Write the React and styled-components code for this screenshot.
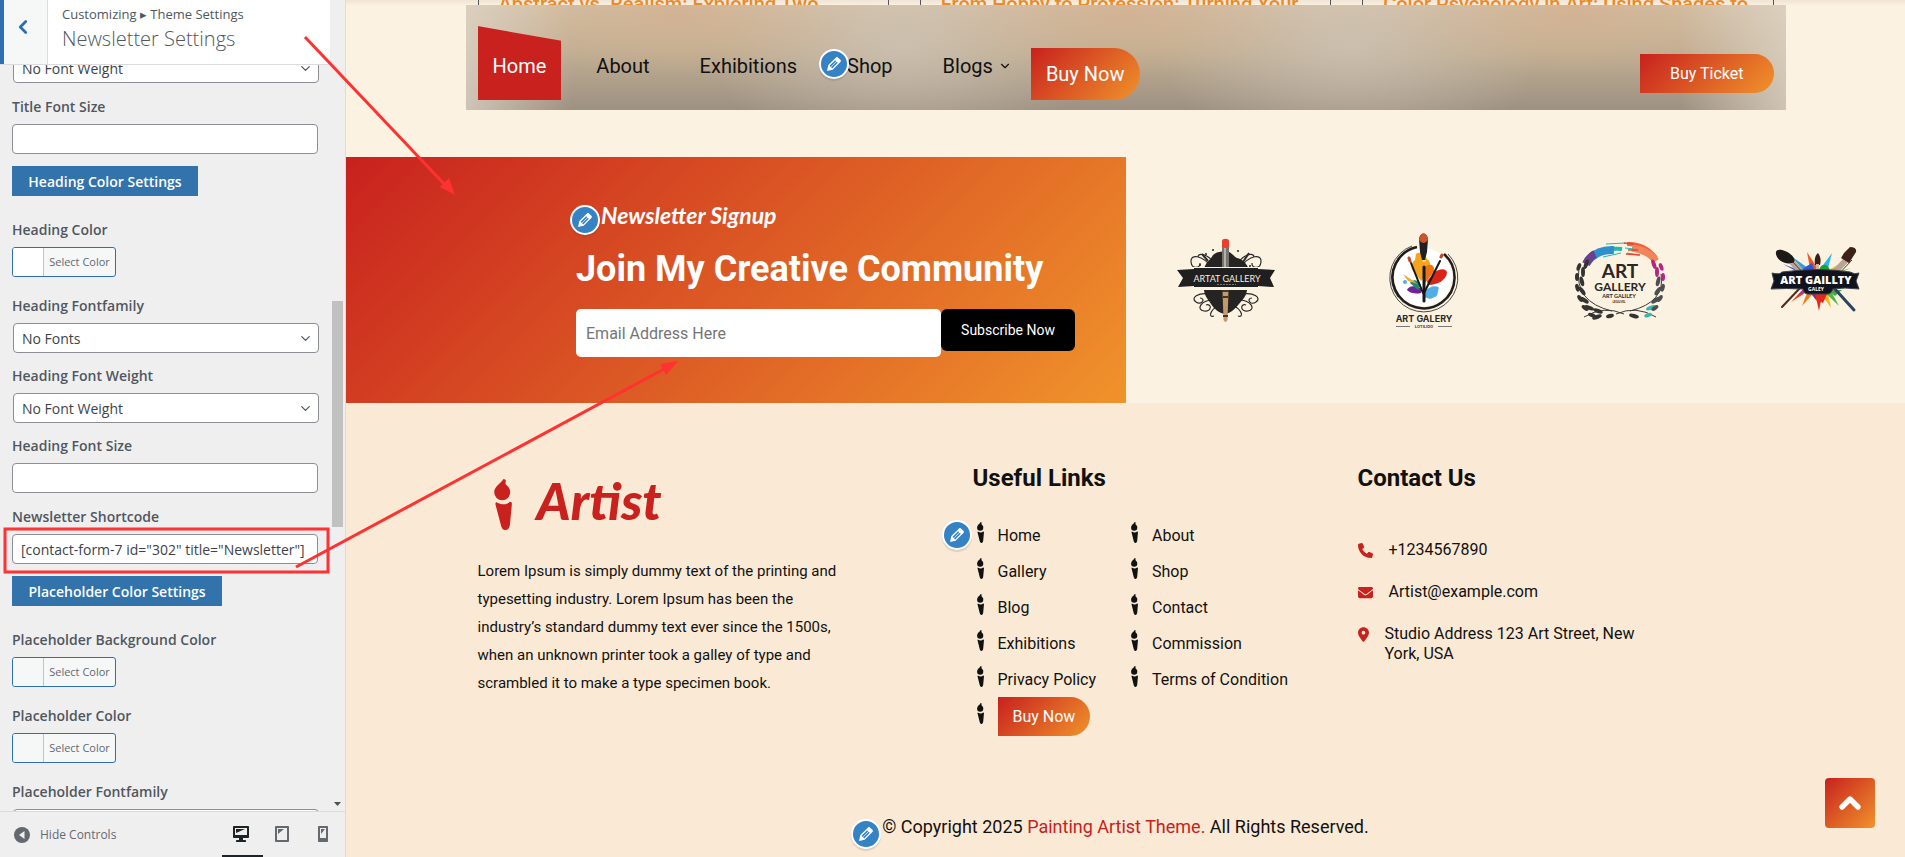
import React from "react";
import styled, { createGlobalStyle, css } from "styled-components";
import { ChevronDown, ChevronLeft, ChevronUp } from "lucide-react";
import { FaEnvelope, FaLocationDot, FaPhone } from "react-icons/fa6";

const GlobalStyle = createGlobalStyle`
  *, *::before, *::after { box-sizing: border-box; }
  body { margin: 0; font-family: Roboto, "Liberation Sans", sans-serif; color: #111; }
  h1, h2, h3, p, ul { margin: 0; padding: 0; }
  ul { list-style: none; }
  a { color: inherit; text-decoration: none; }
  button, input, select { font-family: inherit; margin: 0; }
`;

const warm = "linear-gradient(135deg, #c8211e 0%, #f0932b 100%)";

const Shell = styled.div`
  position: relative;
  display: flex;
  height: 100vh;
  overflow: hidden;
`;

/* ---------- customizer sidebar ---------- */

const Sidebar = styled.aside`
  flex: 0 0 346px;
  display: flex;
  flex-direction: column;
  background: #efeff0;
  border-right: 1px solid #dcdcde;
  color: #50575e;
  font-family: "Open Sans", "Noto Sans", sans-serif;
`;

const PanelHead = styled.header`
  display: flex;
  height: 65px;
  margin-right: 15px;
  background: #fff;
  border-bottom: 1px solid #dcdcde;
`;

const BackButton = styled.button`
  width: 48px;
  padding: 0 0 10px 8px;
  display: flex;
  align-items: center;
  background: #f6f7f7;
  border: 0;
  border-left: 4px solid #2e6fb3;
  border-right: 1px solid #dcdcde;
  color: #2e6fb3;
`;

const PanelTitles = styled.div`
  padding: 4px 14px;
`;

const Crumb = styled.p`
  font-size: 13px;
  line-height: 20px;
`;

const PanelTitle = styled.h1`
  font-size: 20px;
  font-weight: 300;
  line-height: 30px;
`;

const PanelScroll = styled.div`
  flex: 1;
  min-height: 0;
  display: flex;
  overflow: hidden;
`;

const Controls = styled.div`
  flex: 1;
  padding: 0 11px 0 12px;
`;

const FirstControl = styled.div`
  margin-top: -12px;
`;

const Control = styled.div`
  margin-top: ${(p) => p.$gap || 12}px;
`;

const Label = styled.label`
  display: block;
  height: 29px;
  font-size: 14px;
  font-weight: 600;
  line-height: 24px;
`;

const field = css`
  display: block;
  width: 306px;
  height: 30px;
  padding: 0 8px;
  border: 1px solid #8c8f94;
  border-radius: 4px;
  background: #fff;
  color: #3c434a;
  font-size: 14px;
`;

const TextField = styled.input`
  ${field}
`;

const SelectWrap = styled.div`
  position: relative;
  width: 306px;
  margin-left: 1px;

  svg {
    position: absolute;
    right: 6px;
    top: 8px;
    pointer-events: none;
  }
`;

const SelectBox = styled.select`
  ${field}
  appearance: none;
`;

const SectionButton = styled.button`
  display: block;
  width: ${(p) => p.$width}px;
  height: 30px;
  margin-top: 12px;
  margin-bottom: 22px;
  padding: 0;
  border: 0;
  background: #3173aa;
  color: #fff;
  font-size: 14px;
  font-weight: 600;
`;

const ColorButton = styled.button`
  display: flex;
  width: 104px;
  height: 30px;
  padding: 0;
  border: 1px solid #2e6fb3;
  border-radius: 3px;
  background: #f6f7f7;
  color: #646970;
  font-size: 11px;
  line-height: 28px;
  overflow: hidden;
`;

const Swatch = styled.span`
  width: 31px;
  height: 28px;
  background: ${(p) => p.$color};
  border-right: 1px solid #c3c4c7;
`;

const SwatchText = styled.span`
  flex: 1;
  text-align: center;
`;

const Track = styled.div`
  width: 15px;
  display: flex;
  flex-direction: column;
  align-items: center;
  padding: 236px 2px 5px 2px;
`;

const Thumb = styled.div`
  width: 11px;
  height: 226px;
  background: #c1c1c1;
  margin-bottom: auto;
`;

const PanelFoot = styled.footer`
  display: flex;
  justify-content: space-between;
  height: 46px;
  border-top: 1px solid #dcdcde;
`;

const CollapseButton = styled.button`
  display: flex;
  align-items: center;
  gap: 10px;
  padding: 0 0 0 14px;
  border: 0;
  background: none;
  color: #646970;
  font-size: 12px;
`;

const Devices = styled.div`
  display: flex;
`;

const DeviceButton = styled.button`
  width: 41px;
  padding: 5px 3px 0 0;
  border: 0;
  border-bottom: 2px solid ${(p) => (p.$active ? "#1d2327" : "transparent")};
  background: none;
  color: ${(p) => (p.$active ? "#1d2327" : "#646970")};
`;

/* ---------- site preview ---------- */

const Preview = styled.main`
  flex: 1;
  min-width: 0;
  display: flex;
  flex-direction: column;
  background: #fcf2e1;
`;

const Container = styled.div`
  width: 100%;
  max-width: 1320px;
  margin: 0 auto;
  padding: 0 12px;
`;

const PostStrip = styled.section`
  height: 5px;
  overflow: hidden;
  background: linear-gradient(#efe4d5, #fbf0df);
`;

const Posts = styled.div`
  display: grid;
  grid-template-columns: repeat(3, 1fr);
  gap: 31px;
`;

const Post = styled.article`
  height: 8px;
  display: flex;
  align-items: center;
  padding: 0 20px;
  border: solid #555;
  border-width: 0 1px;
`;

const PostTitle = styled.h3`
  color: #e98b2a;
  font-size: 20px;
  font-weight: 500;
  line-height: 24px;
  white-space: nowrap;
`;

const NavBar = styled.nav`
  width: 100%;
  max-width: 1320px;
  height: 105px;
  margin: 0 auto 47px;
  padding: 0 12px;
  display: flex;
  justify-content: space-between;
  align-items: flex-start;
  background:
    linear-gradient(90deg, rgba(222, 212, 198, 0.75), transparent 8%, transparent 92%, rgba(222, 212, 198, 0.75)),
    radial-gradient(ellipse 190px 60px at 16% 10%, rgba(211, 176, 143, 0.75), rgba(211, 176, 143, 0)),
    radial-gradient(ellipse 190px 60px at 50% 10%, rgba(211, 176, 143, 0.75), rgba(211, 176, 143, 0)),
    radial-gradient(ellipse 190px 60px at 84% 10%, rgba(211, 176, 143, 0.75), rgba(211, 176, 143, 0)),
    radial-gradient(ellipse 190px 120px at 33% 40%, rgba(208, 198, 186, 0.65), rgba(208, 198, 186, 0)),
    radial-gradient(ellipse 190px 120px at 67% 40%, rgba(208, 198, 186, 0.65), rgba(208, 198, 186, 0)),
    linear-gradient(#d2c0a6 0%, #c0ae93 45%, #9e9182 100%);
`;

const NavList = styled.ul`
  display: flex;
  align-items: flex-start;
  gap: 20px;
  font-size: 20px;
  line-height: 24px;
`;

const NavItem = styled.li`
  position: relative;
  padding-top: 21px;
  ${(p) => p.$tight && "margin-left: -16px;"}
`;

const NavLink = styled.a`
  display: flex;
  align-items: center;
  gap: 5px;
  height: 74px;
  padding: 6px 15px 0;
  ${(p) =>
    p.$active &&
    css`
      background: #c8211e;
      color: #fff;
      clip-path: polygon(0 0, 100% 20%, 100% 100%, 0 100%);
    `}
`;

const PillLink = styled.a`
  display: inline-flex;
  align-items: center;
  justify-content: center;
  height: ${(p) => p.$height || 39}px;
  padding: 0 ${(p) => p.$pad || 15}px;
  background: ${warm};
  color: #fff;
  font-size: ${(p) => (p.$large ? 20 : 16)}px;
  border-radius: 0 ${(p) => (p.$large ? "26px 26px" : "20px 20px")} 0;
`;

const NavPill = styled(PillLink)`
  margin-top: 22px;
`;

const TicketPill = styled(PillLink)`
  margin-top: 49px;
`;

const Badge = styled.button`
  position: absolute;
  left: ${(p) => p.$left}px;
  top: ${(p) => p.$top}px;
  width: 30px;
  height: 30px;
  display: flex;
  align-items: center;
  justify-content: center;
  padding: 0;
  border: 2px solid #fff;
  border-radius: 50%;
  background: #3582c4;
  color: #fff;
  box-shadow: 0 2px 1px rgba(46, 68, 83, 0.15);
`;

const SignupRow = styled.section`
  display: grid;
  grid-template-columns: 1fr 1fr;
  height: 246px;
`;

const Signup = styled.div`
  padding: 42px 50px 0 230px;
  background: ${warm};
  color: #fff;
`;

const Kicker = styled.p`
  position: relative;
  padding-left: 25px;
  font-family: Lato, sans-serif;
  font-size: 23px;
  font-style: italic;
  font-weight: 700;
  line-height: 32px;
`;

const SignupTitle = styled.h2`
  margin-top: 18px;
  font-size: 36px;
  font-weight: 700;
  line-height: 40px;
  white-space: nowrap;
`;

const SignupForm = styled.form`
  display: flex;
  align-items: flex-start;
  margin-top: 20px;
`;

const EmailInput = styled.input`
  width: 365px;
  height: 48px;
  padding: 0 10px;
  border: 0;
  border-radius: 5px;
  background: #fff;
  font-size: 16px;

  &::placeholder {
    color: #757575;
  }
`;

const SubscribeButton = styled.button`
  width: 134px;
  height: 42px;
  padding: 0;
  border: 0;
  border-radius: 6px;
  background: #000;
  color: #fff;
  font-size: 14px;
`;

const Brands = styled.div`
  overflow: hidden;
`;

const BrandRow = styled.div`
  display: grid;
  grid-template-columns: repeat(4, 1fr);
  height: 100%;
  margin: 0 -10px 0 2px;
  place-items: center;
`;

const Footer = styled.footer`
  position: relative;
  flex: 1;
  padding-top: 61px;
  background: #fae9d4;
`;

const FooterGrid = styled.div`
  display: grid;
  grid-template-columns: 495fr 385fr 416fr;
`;

const Brand = styled.a`
  display: flex;
  align-items: flex-start;
  gap: 25px;
  margin: 15px 0 27px 16px;
  height: 51px;
  color: #c8211e;
  font-family: Lato, sans-serif;
  font-size: 52px;
  font-style: italic;
  font-weight: 900;
  line-height: 42px;
`;

const About = styled.p`
  max-width: 370px;
  font-size: 15px;
  line-height: 28px;
`;

const FooterTitle = styled.h3`
  font-size: 24px;
  font-weight: 700;
  line-height: 29px;
`;

const LinkColumns = styled.div`
  position: relative;
  display: flex;
  gap: 35px;
  margin: 24px 0 0 4px;
`;

const LinkItem = styled.li`
  display: flex;
  align-items: center;
  gap: 14px;
  min-height: 36px;
  font-size: 16px;

  > svg {
    margin-bottom: 6px;
  }
`;

const ContactList = styled.ul`
  display: grid;
  gap: 22px;
  margin-top: 47px;
  font-size: 16px;
  line-height: 20px;
`;

const ContactItem = styled.li`
  display: flex;
  gap: 16px;
  max-width: 290px;

  svg {
    flex: none;
    width: ${(p) => (p.$narrow ? 11 : 15)}px;
    height: 15px;
    margin-top: 3px;
    color: #c8211e;
  }
`;

const Copyright = styled.p`
  margin-top: 79px;
  padding-bottom: 16px;
  font-size: 18px;
  line-height: 24px;
  text-align: center;

  a {
    color: #c8211e;
  }
`;

const CopyrightText = styled.span`
  position: relative;
`;

const TopButton = styled.button`
  position: absolute;
  right: 30px;
  bottom: 29px;
  width: 50px;
  height: 50px;
  display: flex;
  align-items: center;
  justify-content: center;
  padding: 0;
  border: 0;
  border-radius: 4px;
  background: ${warm};
  color: #fff;
`;

const Annotations = styled.svg`
  position: absolute;
  inset: 0;
  width: 100%;
  height: 100%;
  pointer-events: none;
`;

/* ---------- drawings ---------- */

const Pencil = () => (
  <svg width="20" height="20" viewBox="0 0 20 20" fill="currentColor" aria-hidden="true">
    <path d="M13.89 3.39l2.71 2.72c.46.46.42 1.24.03 1.64l-8.01 8.02-5.56 1.16 1.16-5.58s7.6-7.63 7.99-8.03c.39-.39 1.22-.39 1.68.07zm-2.73 2.79l-5.59 5.61 1.11 1.11 5.54-5.65zm-2.97 8.23l5.58-5.6-1.07-1.08-5.59 5.6z" />
  </svg>
);

const EditBadge = ({ left, top, label }) => (
  <Badge type="button" $left={left} $top={top} aria-label={label}>
    <Pencil />
  </Badge>
);

const Torch = ({ width, height }) => (
  <svg width={width} height={height} viewBox="0 0 18 51" preserveAspectRatio="none" fill="currentColor" aria-hidden="true">
    <path d="M9.500 0c1.200 0 2.500.8 2.300 2.200-.3 1-.5 2-.1 3 2.700 2.200 4.500 4.800 4.500 8.100a8 8 0 0 1-16 0C.1 7.500 6.500 5 9.500 0z" />
    <path d="M3 23.500C7 26 13 26 15.500 23c1.500-.6 2.500.6 2.400 2L16 45c-.5 4-1.800 6-4.600 6S7.500 49 6.600 45L1.500 25.500C1.200 24 2 23 3 23.500z" />
  </svg>
);

const DeviceIcon = ({ d }) => (
  <svg width="20" height="20" viewBox="0 0 20 20" fill="currentColor" aria-hidden="true">
    <path fillRule="evenodd" d={d} />
  </svg>
);

const LogoBanner = () => (
  <svg width="100" height="100" viewBox="0 0 100 100" role="img" aria-label="Artat Gallery">
    <g fill="none" stroke="#2b2a29" strokeWidth="1.200">
      <path d="M36 38C26 24 14 24 15 32s10 6 9 1M64 38c10-14 22-14 21-6s-10 6-9 1" />
      <path d="M38 33C32 24 22 22 22 27M62 33c6-9 16-11 16-6" />
      <path d="M34 64c-12-2-20 4-14 8s10-4 4-4M66 64c12-2 20 4 14 8s-10-4-4-4" />
      <path d="M38 70c-14 0-18 10-10 11s8-8 2-6M62 70c14 0 18 10 10 11s-8-8-2-6" />
      <path d="M42 76c-8 4-10 12-4 10M58 76c8 4 10 12 4 10" />
      <path d="M67 32l6-9M32 31l-6-7" strokeWidth="2" />
    </g>
    <path fill="#252423" d="M28 40c1-8 6-9 9-15 5-4 8-3 12-4 6 0 8 5 12 7 5 1 10 5 12 12zM28 60c1 7 4 9 7 14s8 9 14 10c6-1 10-5 14-10s7-7 8-14z" />
    <g fill="#252423">
      <circle cx="30" cy="24" r="1" /><circle cx="37" cy="20" r="1" /><circle cx="62" cy="21" r="1" /><circle cx="24" cy="35" r="1" /><circle cx="74" cy="36" r="1" />
    </g>
    <rect x="46" y="12" width="7" height="29" fill="#77736f" />
    <rect x="48" y="18" width="2" height="22" fill="#b5b0aa" />
    <path fill="#e8402c" d="M46 11c0-3 7-3 7 0v6h-7z" />
    <path fill="#c39a6b" d="M46.500 60h6l-1 30q-2 4-4 0z" />
    <path fill="#45352a" d="M46 60h7v2h-7zM47 66h5v2h-5zM47 85h5v2h-5z" />
    <path fill="#fcf2e1" d="M6 37h88v23H6z" />
    <path fill="#1f1f20" d="M1 40l17-1v-1h64v1l17 1-5 8 4 9-16-1v1H18v-1L2 57l5-9z" />
    <text x="51" y="52" textAnchor="middle" fill="#f3eee6" fontFamily="Lato, sans-serif" fontSize="9">ARTAT GALLERY</text>
    <path d="M41 54.500h19" stroke="#777" strokeWidth="1" strokeDasharray="2 1" />
  </svg>
);

const LogoCircle = () => (
  <svg width="100" height="100" viewBox="-1 1 100 100" role="img" aria-label="Art Galery">
    <circle cx="49" cy="48" r="29" fill="#fff" />
    <g fill="none" stroke="#1d1d1d">
      <path d="M43 18A31 31 0 1 0 70 25" strokeWidth="2.500" />
      <path d="M38 17A34 34 0 1 0 74 25M36 20A32 32 0 0 0 24 68" strokeWidth="0.800" />
    </g>
    <path fill="#f5a51d" d="M42 25c4-3 9 0 11 5 4 2 4 8 1 13l-7 9-7-9c-4-4-3-9 1-12z" />
    <path fill="#ee7412" d="M50 38c8-5 11-1 10 5l-9 11z" />
    <path fill="#db2218" d="M53 52l7-8c5-5 13-5 13 0-1 7-9 12-19 12z" />
    <path fill="#53aee6" d="M50 63c5-6 13-7 15-4-2 3 0 7-4 9l-5 2-6-2zM31 51a2 2 0 1 1 0 4a2 2 0 0 1 0-4z" />
    <path fill="#6d2498" d="M48 61c-5-6-14-4-15 0 4 4 10 4 14 3z" />
    <path fill="#1a8b70" d="M47 56c-3-6-9-6-11-2l8 7z" />
    <path fill="#e9ae2c" d="M44 55l-15-10 5 7z" />
    <g stroke="#171717" strokeLinecap="round">
      <path d="M50 38v34" strokeWidth="3" />
      <path d="M37 34l12 30M66 32L50 64" strokeWidth="2" />
    </g>
    <path fill="#202020" d="M45 10c1-7 8-7 9 0l-1 13-2 8h-3l-2-8z" />
    <path fill="#ca542d" d="M45 11c1-9 8-9 9 0-3 4-6 4-9 0z" />
    <path stroke="#bd4729" strokeWidth="3" strokeLinecap="round" d="M35 29l1 3M68 26l-1 2" />
    <path stroke="#fff" d="M48.500 32h3" />
    <text x="50" y="93" textAnchor="middle" fill="#2a2927" fontFamily="Inter, sans-serif" fontWeight="700" fontSize="9">ART GALERY</text>
    <text x="50" y="99" textAnchor="middle" fill="#444" fontFamily="Inter, sans-serif" fontWeight="700" fontSize="4">LOTILIDO</text>
    <path d="M22 97.500h14M64 97.500h14" stroke="#777" />
  </svg>
);

const leaves = [
  [16, 82, 20], [10, 75, 35], [6, 66, 55], [4, 56, 75], [4, 46, 90], [6, 37, 110],
];

const LogoWreath = () => (
  <svg width="100" height="100" viewBox="0 0 100 100" role="img" aria-label="Art Gallery">
    <path d="M17 33Q27 17 52 19" fill="none" stroke="#20b9b2" strokeWidth="4" />
    <path d="M16 34Q25 19 44 20" fill="none" stroke="#2f8fce" strokeWidth="8" />
    <path d="M16 34q4-8 9-10" fill="none" stroke="#68408f" strokeWidth="8" />
    <path d="M57 14q18-1 29 14" fill="none" stroke="#ee633f" strokeWidth="4" />
    <path d="M62 18q16 2 24 13" fill="none" stroke="#f08658" strokeWidth="7" />
    <path d="M36 14l19-1M33 27l18-4M55 18l9 1M57 23l12 2" fill="none" stroke="#20b9b2" strokeWidth="1" />
    <path d="M54 13l10 1M56 24l14 1M58 20h10" fill="none" stroke="#e24634" strokeWidth="1.500" />
    <g fill="none" stroke="#3a3a39" strokeWidth="1">
      <path d="M9 38Q4 72 42 81M91 44Q96 72 60 81M14 87q20-12 40-3M86 87q-20-12-40-3" />
    </g>
    {leaves.map(([x, y, a], i) => (
      <g key={y}>
        <g transform={`translate(${x + 6} ${y}) rotate(${a})`} fill="#333332">
          <ellipse cx="-4" cy="-3" rx="5" ry="2" />
          <ellipse cx="1" cy="3" rx="4" ry="2" />
        </g>
        <g transform={`translate(${94 - x} ${y}) rotate(${180 - a})`} fill={i > 3 ? "#b5267f" : i === 0 ? "#35b8ad" : "#4b4f52"}>
          <ellipse cx="-4" cy="3" rx="5" ry="2" />
          <ellipse cx="1" cy="-3" rx="4" ry="2" />
        </g>
      </g>
    ))}
    <g fill="#333332">
      <ellipse cx="28" cy="81" rx="5" ry="2" transform="rotate(20 28 81)" />
      <ellipse cx="27" cy="87" rx="5" ry="2" transform="rotate(-20 27 87)" />
      <ellipse cx="40" cy="86" rx="4" ry="2" transform="rotate(-15 40 86)" />
      <ellipse cx="64" cy="86" rx="5" ry="2" transform="rotate(15 64 86)" />
    </g>
    <g fill="#292725" textAnchor="middle" fontFamily="Lato, sans-serif" fontWeight="700">
      <text x="50" y="48" fontSize="19">ART</text>
      <text x="50" y="61" fontSize="12">GALLERY</text>
      <text x="49" y="68" fontSize="5.500">ART GALILEY</text>
      <text x="49" y="73" fontSize="3">LEGUVEL</text>
    </g>
  </svg>
);

const rays = [
  ["#3f5fe0", -34, -16], ["#31a0d8", -26, -24], ["#ef5a2a", -10, -28], ["#2ab7e6", 15, -27], ["#f2c219", 22, -16], ["#74bc3e", 34, -12],
  ["#e33b1e", -26, 22], ["#ef7b1c", -15, 26], ["#e02c23", 2, 31], ["#f2b719", 14, 28], ["#4fb83f", 22, 26], ["#8a3fb0", -20, 16],
];

const LogoCrossed = () => (
  <svg width="100" height="100" viewBox="-3 0 100 100" role="img" aria-label="Art Gaillty">
    {rays.map(([c, x, y]) => (
      <path key={c + x} d={`M42 50L${47 + x} ${50 + y}L55 50z`} fill={c} />
    ))}
    <path fill="#3457cf" d="M30 45c2-8 8-9 12-12l5 14z" />
    <path fill="#1f9d3c" d="M48 44c1-10 8-12 11-6l3 8z" />
    <path fill="#f0d020" d="M57 43c4-7 9-5 12 0z" />
    <path fill="#7e3196" d="M38 60h12l-4 10z" />
    <path fill="#e5281c" d="M46 62h12l-5 11-7-3z" />
    <path fill="#3fa848" d="M58 60h14l-7 6z" />
    <g stroke="#4a2b1c" strokeLinecap="round">
      <path d="M30 58L12 77" strokeWidth="2" />
      <path d="M64 58l20 22" strokeWidth="3" stroke="#29445e" />
    </g>
    <path d="M20 30l14 15M78 28L63 44" stroke="#b8a692" strokeWidth="6" />
    <path d="M20 29l16 17M82 30L65 48" stroke="#463d38" strokeWidth="1" />
    <path fill="#1d1917" d="M6 24c-1-5 4-5 9-3 7 3 11 8 9 11-7 4-17-1-18-8z" />
    <path fill="#3d2119" d="M74 23l6-6q7 0 6 5l-7 11-8-5z" />
    <path fill="#3b1f17" d="M45 35c-1-8 1-10 3-12 3 4 3 8 2 12z" />
    <path stroke="#c9b79f" strokeWidth="3" d="M47.500 34v8" />
    <path fill="#10131d" stroke="#3b404c" strokeWidth="1" d="M2 43q8 2 10-1 38-5 68 0 5 3 9 1l-3 8 3 8q-15-2-26 0-2 5-5 5H38q-4 0-5-5-17-1-32 0l3-8z" />
    <text x="46" y="54" textAnchor="middle" fill="#fff" fontFamily="Open Sans, sans-serif" fontWeight="800" fontSize="11">ART GAILLTY</text>
    <text x="46" y="61" textAnchor="middle" fill="#fff" fontFamily="Open Sans, sans-serif" fontWeight="700" fontSize="5">GALEY</text>
  </svg>
);

/* ---------- page ---------- */

const SelectControl = ({ id, label, value, gap }) => (
  <Control $gap={gap}>
    <Label htmlFor={id}>{label}</Label>
    <SelectWrap>
      <SelectBox id={id} defaultValue={value}>
        <option>{value}</option>
      </SelectBox>
      <ChevronDown size={15} />
    </SelectWrap>
  </Control>
);

const TextControl = ({ id, label, value = "", gap }) => (
  <Control $gap={gap}>
    <Label htmlFor={id}>{label}</Label>
    <TextField id={id} type="text" defaultValue={value} />
  </Control>
);

const ColorControl = ({ id, label, color = "#f6f7f7", gap }) => (
  <Control $gap={gap}>
    <Label htmlFor={id}>{label}</Label>
    <ColorButton id={id} type="button">
      <Swatch $color={color} />
      <SwatchText>Select Color</SwatchText>
    </ColorButton>
  </Control>
);

const primaryLinks = ["Home", "Gallery", "Blog", "Exhibitions", "Privacy Policy"];
const secondaryLinks = ["About", "Shop", "Contact", "Commission", "Terms of Condition"];
const postTitles = [
  "Abstract vs. Realism: Exploring Two",
  "From Hobby to Profession: Turning Your",
  "Color Psychology in Art: Using Shades to",
];

const FooterLink = ({ children }) => (
  <LinkItem>
    <Torch width={7} height={21} />
    <a href="#">{children}</a>
  </LinkItem>
);

export default function App() {
  return (
    <Shell>
      <GlobalStyle />
      <Sidebar>
        <PanelHead>
          <BackButton type="button" aria-label="Back">
            <ChevronLeft size={22} strokeWidth={3} />
          </BackButton>
          <PanelTitles>
            <Crumb>Customizing ▸ Theme Settings</Crumb>
            <PanelTitle>Newsletter Settings</PanelTitle>
          </PanelTitles>
        </PanelHead>
        <PanelScroll>
          <Controls>
            <FirstControl>
              <SelectWrap>
                <SelectBox aria-label="Title Font Weight" defaultValue="No Font Weight">
                  <option>No Font Weight</option>
                </SelectBox>
                <ChevronDown size={15} />
              </SelectWrap>
            </FirstControl>
            <TextControl id="title-size" label="Title Font Size" />
            <SectionButton type="button" $width={186}>Heading Color Settings</SectionButton>
            <ColorControl id="heading-color" label="Heading Color" color="#fff" gap={22} />
            <SelectControl id="heading-family" label="Heading Fontfamily" value="No Fonts" gap={17} />
            <SelectControl id="heading-weight" label="Heading Font Weight" value="No Font Weight" gap={11} />
            <TextControl id="heading-size" label="Heading Font Size" gap={11} />
            <TextControl id="shortcode" label="Newsletter Shortcode" value={'[contact-form-7 id="302" title="Newsletter"]'} />
            <SectionButton type="button" $width={210}>Placeholder Color Settings</SectionButton>
            <ColorControl id="placeholder-bg" label="Placeholder Background Color" gap={22} />
            <ColorControl id="placeholder-color" label="Placeholder Color" gap={17} />
            <SelectControl id="placeholder-family" label="Placeholder Fontfamily" value="No Fonts" gap={17} />
          </Controls>
          <Track>
            <Thumb />
            <svg width="7" height="4" viewBox="0 0 7 4" aria-hidden="true">
              <path d="M0 0h7L3.500 4z" fill="#505050" />
            </svg>
          </Track>
        </PanelScroll>
        <PanelFoot>
          <CollapseButton type="button">
            <svg width="16" height="16" viewBox="0 0 16 16" aria-hidden="true">
              <circle cx="8" cy="8" r="8" fill="#646970" />
              <path d="M10.500 4v8L5 8z" fill="#efeff0" />
            </svg>
            Hide Controls
          </CollapseButton>
          <Devices>
            <DeviceButton type="button" $active aria-label="Desktop preview">
              <DeviceIcon d="M3 2h14c.55 0 1 .45 1 1v10c0 .55-.45 1-1 1h-5v2h2c.55 0 1 .45 1 1v1H5v-1c0-.55.45-1 1-1h2v-2H3c-.55 0-1-.45-1-1V3c0-.55.45-1 1-1zm13 9V4H4v7h12zM5 5h9L5 9V5z" />
            </DeviceButton>
            <DeviceButton type="button" aria-label="Tablet preview">
              <DeviceIcon d="M4 2h12c.55 0 1 .45 1 1v14c0 .55-.45 1-1 1H4c-.55 0-1-.45-1-1V3c0-.55.45-1 1-1zm11 14V4H5v12h10zM6 5h6l-6 5V5z" />
            </DeviceButton>
            <DeviceButton type="button" aria-label="Mobile preview">
              <DeviceIcon d="M6 2h8c.55 0 1 .45 1 1v14c0 .55-.45 1-1 1H6c-.55 0-1-.45-1-1V3c0-.55.45-1 1-1zm7 12V4H7v10h6zM8 5h4l-4 5V5z" />
            </DeviceButton>
          </Devices>
        </PanelFoot>
      </Sidebar>

      <Preview>
        <PostStrip>
          <Container>
            <Posts>
              {postTitles.map((title) => (
                <Post key={title}>
                  <PostTitle>{title}</PostTitle>
                </Post>
              ))}
            </Posts>
          </Container>
        </PostStrip>

        <NavBar>
          <NavList>
            <NavItem><NavLink href="#" $active>Home</NavLink></NavItem>
            <NavItem><NavLink href="#">About</NavLink></NavItem>
            <NavItem><NavLink href="#">Exhibitions</NavLink></NavItem>
            <NavItem>
              <NavLink href="#">Shop</NavLink>
              <EditBadge left={-13} top={44} label="Edit menu" />
            </NavItem>
            <NavItem>
              <NavLink href="#">Blogs <ChevronDown size={14} /></NavLink>
            </NavItem>
            <NavItem $tight>
              <NavPill href="#" $large $height={52}>Buy Now</NavPill>
            </NavItem>
          </NavList>
          <TicketPill href="#" $pad={30}>Buy Ticket</TicketPill>
        </NavBar>

        <SignupRow>
          <Signup>
            <Kicker>
              Newsletter Signup
              <EditBadge left={-6} top={6} label="Edit newsletter" />
            </Kicker>
            <SignupTitle>Join My Creative Community</SignupTitle>
            <SignupForm>
              <EmailInput type="email" placeholder="Email Address Here" aria-label="Email Address" />
              <SubscribeButton type="button">Subscribe Now</SubscribeButton>
            </SignupForm>
          </Signup>
          <Brands>
            <BrandRow>
              <LogoBanner />
              <LogoCircle />
              <LogoWreath />
              <LogoCrossed />
            </BrandRow>
          </Brands>
        </SignupRow>

        <Footer>
          <Container>
            <FooterGrid>
              <div>
                <Brand href="#">
                  <Torch width={18} height={51} />
                  Artist
                </Brand>
                <About>
                  Lorem Ipsum is simply dummy text of the printing and typesetting industry. Lorem Ipsum has been the
                  industry’s standard dummy text ever since the 1500s, when an unknown printer took a galley of type and
                  scrambled it to make a type specimen book.
                </About>
              </div>
              <div>
                <FooterTitle>Useful Links</FooterTitle>
                <LinkColumns>
                  <EditBadge left={-35} top={3} label="Edit links" />
                  <ul>
                    {primaryLinks.map((l) => <FooterLink key={l}>{l}</FooterLink>)}
                    <LinkItem>
                      <Torch width={7} height={21} />
                      <PillLink href="#">Buy Now</PillLink>
                    </LinkItem>
                  </ul>
                  <ul>
                    {secondaryLinks.map((l) => <FooterLink key={l}>{l}</FooterLink>)}
                  </ul>
                </LinkColumns>
              </div>
              <div>
                <FooterTitle>Contact Us</FooterTitle>
                <ContactList>
                  <ContactItem><FaPhone /><a href="#">+1234567890</a></ContactItem>
                  <ContactItem><FaEnvelope /><a href="#">Artist@example.com</a></ContactItem>
                  <ContactItem $narrow><FaLocationDot /><span>Studio Address 123 Art Street, New York, USA</span></ContactItem>
                </ContactList>
              </div>
            </FooterGrid>
            <Copyright>
              <CopyrightText>
                <EditBadge left={-31} top={3} label="Edit copyright" />
                © Copyright 2025 <a href="#">Painting Artist Theme.</a> All Rights Reserved.
              </CopyrightText>
            </Copyright>
          </Container>
          <TopButton type="button" aria-label="Back to top">
            <ChevronUp size={32} strokeWidth={4} />
          </TopButton>
        </Footer>
      </Preview>

      <Annotations aria-hidden="true">
        <g stroke="#ff3131" strokeWidth="3" fill="none">
          <rect x="5" y="529" width="323" height="43" />
          <path d="M305 37L447 187M296 567L664 369" />
        </g>
        <path fill="#ff3131" d="M455 195l-15-8 9-9zM678 361l-12 14-6-11z" />
      </Annotations>
    </Shell>
  );
}
